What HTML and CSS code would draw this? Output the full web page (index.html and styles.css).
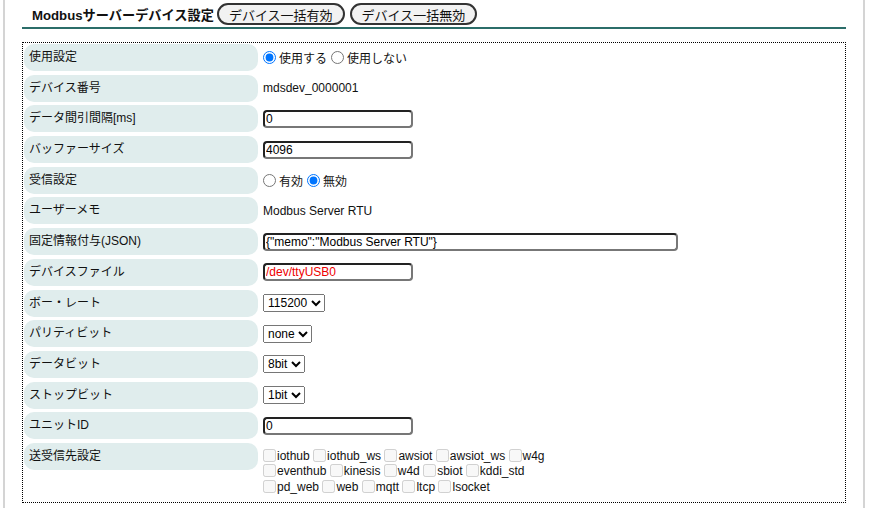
FILE: index.html
```html
<!DOCTYPE html>
<html lang="ja">
<head>
    <meta charset="UTF-8">
    <title>Modbusサーバーデバイス設定</title>
    <link rel="stylesheet" href="styles.css">
</head>
<body>
    <div class="page">
        <div class="header">
            <span class="title">Modbusサーバーデバイス設定</span>
            <button class="pill">デバイス一括有効</button>
            <button class="pill">デバイス一括無効</button>
        </div>

        <div class="box">
            <div class="form">
                <div class="label">使用設定</div>
                <div class="value">
                    <label><input type="radio" name="use" checked>使用する</label>
                    <label><input type="radio" name="use">使用しない</label>
                </div>

                <div class="label">デバイス番号</div>
                <div class="value">mdsdev_0000001</div>

                <div class="label">データ間引間隔[ms]</div>
                <div class="value"><input class="text" type="text" value="0"></div>

                <div class="label">バッファーサイズ</div>
                <div class="value"><input class="text" type="text" value="4096"></div>

                <div class="label">受信設定</div>
                <div class="value">
                    <label><input type="radio" name="recv">有効</label>
                    <label><input type="radio" name="recv" checked>無効</label>
                </div>

                <div class="label">ユーザーメモ</div>
                <div class="value">Modbus Server RTU</div>

                <div class="label">固定情報付与(JSON)</div>
                <div class="value"><input class="text wide" type="text" value='{"memo":"Modbus Server RTU"}'></div>

                <div class="label">デバイスファイル</div>
                <div class="value"><input class="text red" type="text" value="/dev/ttyUSB0"></div>

                <div class="label">ボー・レート</div>
                <div class="value"><select><option>115200</option></select></div>

                <div class="label">パリティビット</div>
                <div class="value"><select><option>none</option></select></div>

                <div class="label">データビット</div>
                <div class="value"><select><option>8bit</option></select></div>

                <div class="label">ストップビット</div>
                <div class="value"><select><option>1bit</option></select></div>

                <div class="label">ユニットID</div>
                <div class="value"><input class="text" type="text" value="0"></div>

                <div class="label">送受信先設定</div>
                <div class="value checks">
                    <div>
                        <label><input type="checkbox" disabled>iothub</label>
                        <label><input type="checkbox" disabled>iothub_ws</label>
                        <label><input type="checkbox" disabled>awsiot</label>
                        <label><input type="checkbox" disabled>awsiot_ws</label>
                        <label><input type="checkbox" disabled>w4g</label>
                    </div>
                    <div>
                        <label><input type="checkbox" disabled>eventhub</label>
                        <label><input type="checkbox" disabled>kinesis</label>
                        <label><input type="checkbox" disabled>w4d</label>
                        <label><input type="checkbox" disabled>sbiot</label>
                        <label><input type="checkbox" disabled>kddi_std</label>
                    </div>
                    <div>
                        <label><input type="checkbox" disabled>pd_web</label>
                        <label><input type="checkbox" disabled>web</label>
                        <label><input type="checkbox" disabled>mqtt</label>
                        <label><input type="checkbox" disabled>ltcp</label>
                        <label><input type="checkbox" disabled>lsocket</label>
                    </div>
                </div>
            </div>
        </div>
    </div>
</body>
</html>
```

FILE: styles.css
```css
body { margin: 0; font-family: "Liberation Sans", "Noto Sans CJK JP", sans-serif; font-size: 12px; color: #111; background: #fff; }
.page {
    margin: 0 6px 0 3px; min-height: 100vh; box-sizing: border-box;
    border-left: 2px solid #d4d4d4; border-right: 2px solid #d4d4d4;
    padding: 0 17px;
}
.header {
    display: flex; align-items: center; gap: 5px;
    padding: 3px 0 2px 10px; border-bottom: 2px solid #2b6d69;
}
.title { font-weight: bold; font-size: 13.2px; margin-right: -2px; }
.pill {
    font-family: inherit; font-size: 13px; color: #111;
    height: 22px; padding: 0 10px; background: #f2f2f2;
    border: 2px solid #333; border-radius: 11px; cursor: pointer;
}
.box { margin-top: 13px; border: 1px dotted #000; padding: 1px 1px 7px 1px; }
.form {
    display: grid; grid-template-columns: 234px 1fr;
    column-gap: 5px; row-gap: 3.7px; align-items: start;
}
.label {
    height: 27px; line-height: 27px; padding-left: 5px;
    background: #e0eded; border-radius: 10px;
}
.value { min-height: 27px; display: flex; align-items: center; }
.value label { display: inline-flex; align-items: center; margin-right: 4px; }
.value input[type="radio"] { margin: 0 3px 0 0; width: 13px; height: 13px; }
.text {
    box-sizing: border-box; width: 150px; height: 18px; padding: 0 1px;
    font-family: inherit; font-size: 12px; color: #000;
    border: 2px solid #222; border-right-color: #777; border-bottom-color: #777;
    border-radius: 4px; outline: none;
}
.text.wide { width: 415px; }
.text.red { color: #e00; }
select { font-family: inherit; font-size: 12px; height: 18px; padding: 0; color: #000; }
.checks { display: block; padding-top: 6px; line-height: 15.5px; }
.checks label { display: inline; margin-right: 0; }
.checks input { margin: 0 1px 0 0; width: 13px; height: 13px; vertical-align: -2px; }
```
